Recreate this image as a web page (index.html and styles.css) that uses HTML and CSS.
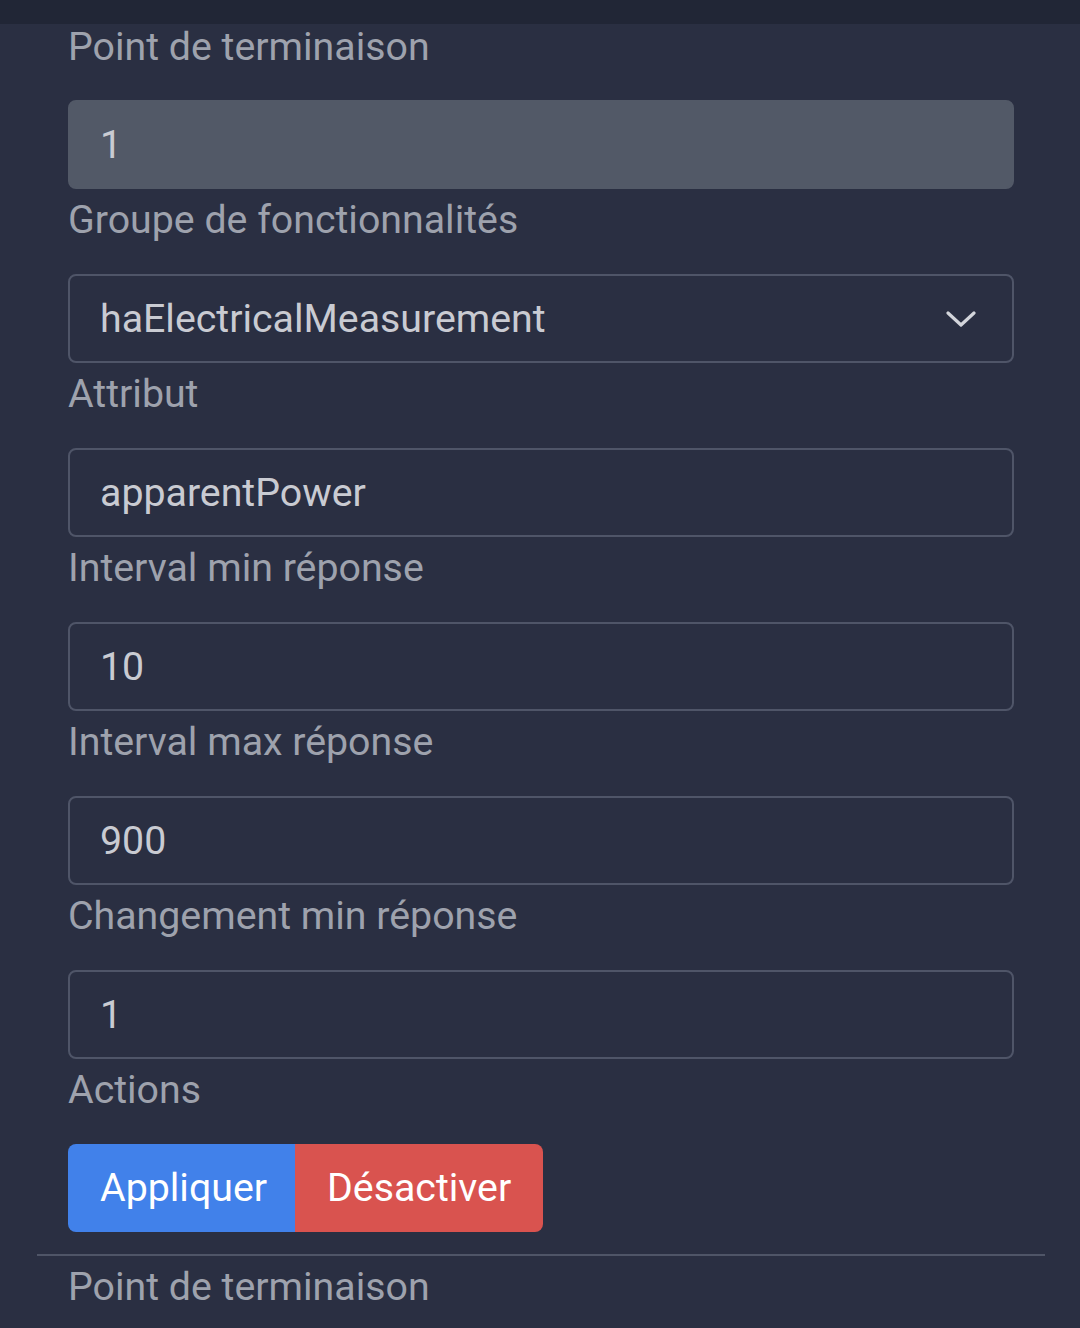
FILE: index.html
```html
<!DOCTYPE html>
<html lang="fr">
<head>
<meta charset="utf-8">
<link rel="stylesheet" href="styles.css">
</head>
<body>
<div class="topbar"></div>
<div class="page">
  <div class="section">
    <div class="label first">Point de terminaison</div>
    <div class="field disabled">1</div>
    <div class="label">Groupe de fonctionnalités</div>
    <div class="field select">
      <span>haElectricalMeasurement</span>
      <svg class="chev" width="30" height="18" viewBox="0 0 30 18"><path d="M2 3 L15 15 L28 3" fill="none" stroke="#d3d5db" stroke-width="3.2" stroke-linecap="round" stroke-linejoin="round"/></svg>
    </div>
    <div class="label">Attribut</div>
    <div class="field">apparentPower</div>
    <div class="label">Interval min réponse</div>
    <div class="field">10</div>
    <div class="label">Interval max réponse</div>
    <div class="field">900</div>
    <div class="label">Changement min réponse</div>
    <div class="field">1</div>
    <div class="label">Actions</div>
    <div class="buttons">
      <button class="btn apply">Appliquer</button>
      <button class="btn disable">Désactiver</button>
    </div>
  </div>
  <div class="divider"></div>
  <div class="section">
    <div class="label">Point de terminaison</div>
  </div>
</div>
</body>
</html>
```
FILE: styles.css
```css
html, body {
  margin: 0;
  padding: 0;
  background: #2a2f42;
  font-family: Roboto, "Liberation Sans", sans-serif;
  height: 1328px;
  overflow: hidden;
}
.topbar {
  position: relative;
  z-index: 2;
  height: 24px;
  background: #212636;
}
.page {
  margin-top: -6px;
  padding: 0 35px 0 37px;
}
.section {
  padding: 0 31px;
}
.label {
  font-size: 39.3px;
  line-height: 56px;
  color: #9ea2ad;
  padding-top: 3px;
  padding-bottom: 26px;
}
.label.first {
  padding-top: 1px;
  padding-bottom: 25px;
}
.field {
  box-sizing: border-box;
  height: 89px;
  border: 2px solid #4f5568;
  border-radius: 8px;
  padding: 0 30px;
  display: flex;
  align-items: center;
  font-size: 39.3px;
  color: #c9cbd2;
}
.field.disabled {
  background: #525967;
  border-color: #525967;
}
.field.select {
  justify-content: space-between;
  padding-right: 36px;
}
.chev {
  display: block;
}
.buttons {
  display: flex;
}
.btn {
  height: 88px;
  border: none;
  margin: 0;
  font-family: Roboto, "Liberation Sans", sans-serif;
  font-size: 39.3px;
  color: #ffffff;
  cursor: pointer;
}
.btn.apply {
  background: #4181ea;
  border-radius: 8px 0 0 8px;
  padding: 0 28px 0 32px;
}
.btn.disable {
  background: #d9534f;
  border-radius: 0 8px 8px 0;
  padding: 0 32px;
}
.divider {
  height: 2px;
  background: #4f5567;
  margin-top: 22px;
}
```
